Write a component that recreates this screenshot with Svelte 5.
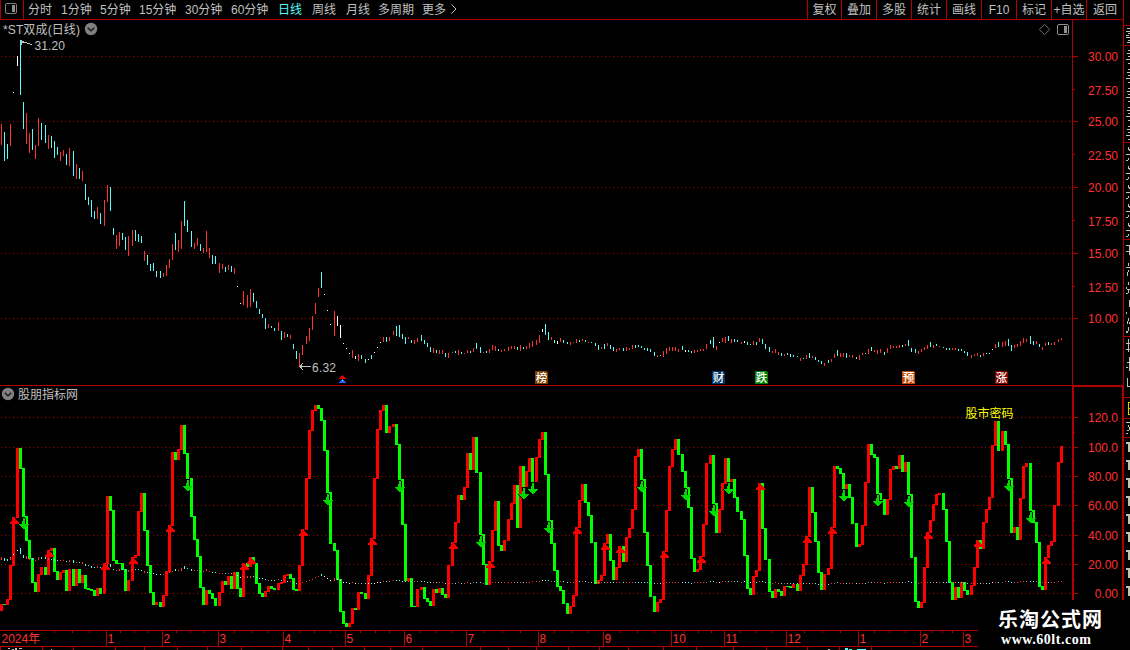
<script>
  const periods = [
    ['分时', 28], ['1分钟', 61], ['5分钟', 100], ['15分钟', 139], ['30分钟', 185], ['60分钟', 231],
    ['日线', 278], ['周线', 312], ['月线', 346], ['多周期', 378], ['更多', 422]
  ].map(([label, start], i, all) => ({
    label,
    width: (all[i + 1] ? all[i + 1][1] : 450) - start,
    active: label === '日线'
  }));
  const tools = ['复权', '叠加', '多股', '统计', '画线', 'F10', '标记', '+自选', '返回'];

  // Bar centres: 3px apart, with an extra pixel after these positions
  const jumps = new Set([13, 41, 69, 100, 128, 156, 187, 215, 243, 274, 302, 330, 361, 389, 417, 448, 476,
    504, 532, 563, 591, 619, 650, 678, 706, 737, 765, 793, 824, 852, 880, 911, 939, 967, 998, 1026, 1054]);
  const xs = [];
  for (let x = 1; x <= 1061; x += jumps.has(x) ? 4 : 3) xs.push(x);

  // colour, top and bottom of each day's range
  const days = `r124:145 c132:161 c144:159 r124:146 w92:93 w56:66 c40:95 c102:129 r113:144 r133:153 c129:150 r145:159 r118:146 c123:140
c125:143 r135:149 c136:148 c141:158 c147:155 r152:161 r150:156 c154:165 r148:166 c151:176 r164:179 c168:179 r171:181 c184:200
c197:205 c200:217 c211:219 r207:219 c213:224 r200:226 r185:202 c187:211 c228:235 r235:249 r232:246 c233:240 c237:250 r236:256
r230:246 c230:241 c234:242 c236:243 r251:261 c255:265 c264:271 c263:271 c271:277 c271:278 r273:277 r265:276 r259:268 r244:260
c233:250 r240:252 r221:249 c201:226 c220:232 c231:247 r243:249 r238:246 c244:251 r248:253 r231:252 r248:258 c255:264 c256:264
r263:273 r264:269 c267:272 r265:270 c266:272 r268:274 w286:287 w303:304 r291:305 r295:308 r289:307 c293:302 c301:308 c309:314
c314:318 c318:329 r324:328 c326:328 c328:331 r322:331 c331:340 r332:338 c334:337 r335:339 c344:349 c351:359 r353:366 r345:355
r336:344 r328:341 r316:330 r303:314 r288:297 c272:288 w294:295 w310:311 w324:325 r311:336 w316:326 w325:338 w343:344 w348:349
w353:354 r350:358 w356:359 r354:361 c355:359 c359:363 w359:360 c355:359 w352:353 w347:348 w342:343 r337:342 c337:342 r337:341
r331:335 c326:336 c325:337 c334:339 c337:344 r337:339 c340:343 r340:344 r338:342 c335:341 c340:344 c343:347 c347:352 r348:353
c350:353 r350:354 r350:354 c353:357 r353:358 r352:353 c351:353 r350:355 c352:354 r353:354 r350:353 c351:353 r348:352 c343:349
c347:353 r352:353 c351:353 r349:353 r345:350 r346:351 c349:351 r350:352 r349:351 r347:351 r346:349 r346:349 c347:350 r345:351
c347:349 r346:349 r343:348 r341:347 r340:345 r335:343 w329:332 c324:335 c332:340 r337:340 c340:343 w341:344 r338:342 c340:343
c342:344 r342:345 r342:343 r339:343 c340:342 r339:341 c340:342 r342:343 c342:343 c343:346 c345:350 r347:349 c344:349 r343:346
c345:349 c347:351 r349:352 r348:350 c348:351 r347:351 r348:350 r345:349 c345:348 c345:347 c346:348 c348:350 c348:351 c349:352
c352:356 r355:357 c355:356 r351:357 r348:354 r347:351 r347:351 r347:351 r349:352 c346:350 w350:352 c350:352 c351:353 r350:353
r350:352 r349:351 r349:351 r344:349 c340:344 c337:348 r346:350 w342:343 r338:342 r337:343 c336:341 r339:343 c339:342 c340:342
r342:344 w341:343 c342:345 c344:345 r341:345 c342:345 r338:342 c339:344 c344:349 c347:352 r351:353 r349:353 r352:355 c353:356
r354:356 c353:355 c354:357 c355:357 c356:357 r358:361 c358:359 r355:359 c353:358 r356:358 c357:360 c360:362 c361:364 r363:366
c360:363 r359:362 r354:358 c350:356 r353:357 r353:357 c353:358 r355:357 r355:358 c357:359 r355:360 r353:355 c353:354 r349:354
c347:351 r350:352 r350:354 r349:353 c352:355 r348:353 r345:349 r346:348 r346:348 r345:348 c345:347 r344:346 c340:346 c348:352
c349:353 r351:354 r349:352 r347:350 r345:349 c342:347 r345:348 c344:346 r346:347 c347:348 c348:350 c348:350 r348:350 r348:350
c349:351 c349:351 c351:353 c352:356 r355:358 r354:356 r353:356 c355:357 r353:356 c353:354 c353:354 w349:350 r344:348 c342:347
r342:347 r341:346 c339:346 c345:351 r345:348 r344:347 r341:346 r338:343 r339:342 c336:344 c341:345 r341:344 c344:347 r347:350
r343:346 c342:345 r343:345 r342:345 r339:342 r338:340`.split(/\s+/).map((d, i) => {
    const [top, bottom] = d.slice(1).split(':').map(Number);
    return { x: xs[i], tone: d[0], top, bottom };
  });

  // Oscillator levels in thirds of a pixel, measured from the pane's top
  const levels = [657, 657, 642, 540, 396, 189, 249, 393, 465, 519, 591, 618, 567, 546, 567, 495, 489, 558, 582, 561, 555, 615, 552, 600,
    552, 591, 570, 609, 612, 615, 630, 609, 624, 534, 333, 375, 525, 534, 535, 552, 615, 585, 516, 510, 378, 324, 435, 540, 621, 657,
    651, 663, 630, 558, 420, 201, 222, 192, 120, 204, 279, 393, 462, 513, 606, 657, 615, 624, 639, 660, 621, 588, 597, 573, 609, 561,
    609, 633, 534, 543, 516, 534, 594, 624, 633, 618, 603, 609, 612, 594, 591, 570, 567, 579, 612, 615, 540, 432, 279, 135, 75, 60,
    69, 105, 195, 321, 474, 495, 582, 678, 714, 723, 714, 669, 672, 621, 624, 639, 570, 459, 279, 132, 75, 60, 141, 123, 117, 177,
    282, 417, 585, 579, 663, 664, 612, 606, 639, 648, 660, 612, 621, 609, 627, 636, 540, 471, 411, 330, 342, 306, 204, 252, 156, 261,
    447, 537, 597, 528, 435, 348, 480, 495, 465, 402, 354, 300, 426, 243, 303, 258, 219, 288, 216, 162, 141, 267, 405, 474, 555, 603,
    615, 654, 684, 663, 630, 426, 345, 297, 351, 390, 471, 594, 585, 570, 474, 447, 525, 582, 546, 483, 528, 456, 429, 372, 213, 192,
    282, 441, 540, 633, 678, 651, 642, 498, 375, 243, 192, 162, 207, 258, 306, 366, 519, 558, 552, 513, 417, 234, 210, 354, 441, 372,
    294, 219, 288, 282, 336, 378, 402, 510, 609, 627, 573, 555, 294, 429, 522, 618, 636, 612, 618, 630, 603, 602, 606, 597, 615, 570,
    537, 453, 306, 381, 468, 561, 612, 567, 549, 426, 243, 249, 264, 309, 297, 336, 414, 483, 477, 420, 291, 177, 207, 216, 324, 342,
    387, 342, 252, 243, 249, 210, 258, 231, 327, 516, 648, 666, 651, 546, 441, 405, 357, 327, 324, 372, 468, 591, 642, 606, 636, 591,
    615, 627, 600, 546, 465, 489, 411, 372, 336, 180, 108, 195, 138, 177, 279, 441, 426, 462, 339, 243, 234, 375, 411, 471, 603, 612,
    516, 480, 468, 360, 231, 183].map((v) => 385 + Math.round(v / 3));
  const steps = levels.map((v, i) => {
    const from = i ? levels[i - 1] : 610;
    return { x: xs[i] - 1, y: Math.min(v, from), h: Math.abs(v - from) + 1, up: v < from || i === 0 };
  });
  const ups = [4, 15, 33, 42, 54, 78, 80, 97, 119, 145, 157, 185, 194, 199, 213, 225, 244, 259, 267, 298, 314, 336];
  const downs = [7, 60, 105, 128, 154, 168, 171, 176, 206, 220, 229, 234, 271, 282, 292, 324, 331];

  const toLower = (y) => Math.round(593.6 - 1.467 * (10 + (318.5 - y) / 13.12));
  const tones = { r: '#ff3030', c: '#54fcfc', w: '#ffffff' };

  const upperAxis = [[56, '30.00', 56], [89, '27.50', 90], [121, '25.00', 121], [154, '22.50', 155], [187, '20.00', 187],
    [220, '17.50', 221], [253, '15.00', 253], [286, '12.50', 287], [318, '10.00', 318]];
  const lowerAxis = [[417, '120.0'], [447, '100.0'], [476, '80.00'], [505, '60.00'], [535, '40.00'], [564, '20.00'], [593, '0.00']];
  const lowerMinor = [432, 462, 491, 520, 550, 579];
  const months = [[0, '2024年'], [106, '1'], [162, '2'], [218, '3'], [283, '4'], [345, '5'], [404, '6'], [466, '7'], [538, '8'],
    [603, '9'], [671, '10'], [724, '11'], [786, '12'], [858, '1'], [920, '2'], [963, '3']];
  const weekTicks = [54, 72, 89, 120, 134, 148, 176, 190, 204, 234, 251, 267, 299, 314, 330, 360, 375, 389, 420, 435, 451, 484, 502,
    520, 554, 571, 587, 620, 637, 654, 684, 698, 711, 740, 755, 771, 804, 822, 840, 874, 889, 905, 931, 942, 952];
  const tabTicks = [0, 42, 73, 115, 144, 177, 207, 241, 282, 308, 332, 364, 390, 422, 480, 508, 536, 568, 599, 628, 663, 696, 733,
    766, 807, 839, 871];
  const badges = [['榜', 535, '#7f3f00'], ['财', 712, '#003468'], ['跌', 755, '#008000'], ['预', 902, '#c04808'], ['涨', 995, '#800000']];
  const sideRules = [25, 45, 142, 239, 336, 397, 418, 437];
  const sellRows = [50, 69, 88, 107, 126];
  const buyRows = [147, 166, 185, 204, 223];
  const ones = [442, 460, 478, 496, 514, 532, 550, 568, 586];
</script>

<div class="app">
  <header class="toolbar">
    <div class="panel-toggle">
      <svg width="12" height="12" viewBox="0 0 12 12">
        <rect x=".5" y=".5" width="11" height="10" rx="1.5" fill="none" stroke="#808080" />
        <rect x="7" y="2" width="3" height="7" fill="#909090" />
      </svg>
    </div>
    <nav class="periods">
      {#each periods as p}
        <span class:active={p.active} style:width="{p.width}px">{p.label}</span>
      {/each}
      <svg width="8" height="10" viewBox="0 0 8 10"><path d="M1.5 .5L6 5L1.5 9.5" fill="none" stroke="#c0c0c0" /></svg>
    </nav>
    <div class="tools">
      {#each tools as t}<span>{t}</span>{/each}
    </div>
    <div class="edge"></div>
  </header>

  <svg class="charts" width="1130" height="630" viewBox="0 20 1130 630" shape-rendering="crispEdges">
    <text class="label" x="3" y="33.5" textLength="77">*ST双成(日线)</text>
    <g shape-rendering="auto" fill="none">
      <circle cx="91" cy="29" r="6.2" fill="#808080" />
      <path d="M87.7 27.7L91 30.8L94.3 27.7" stroke="#181818" stroke-width="1.3" />
      <circle cx="8" cy="394" r="6.2" fill="#808080" />
      <path d="M4.7 392.7L8 395.8L11.3 392.7" stroke="#181818" stroke-width="1.3" />
      <path d="M1044.5 24.3L1049.7 29.5L1044.5 34.7L1039.3 29.5Z" stroke="#707070" />
      <rect x="1057.5" y="24.5" width="11" height="10" rx="1.5" stroke="#909090" />
      <rect x="1064" y="26" width="3" height="7" fill="#909090" />
    </g>

    <g stroke="#a00000" stroke-dasharray="1 3">
      {#each upperAxis as [y], i}
        {#if i % 2 === 0}<path d="M1 {y + 0.5}H1072" />{/if}
      {/each}
      {#each lowerAxis as [y]}<path d="M1 {y + 0.5}H1072" />{/each}
    </g>

    <g fill="#b00000">
      <rect x="1072" y="20" width="1" height="366" />
      <rect x="0" y="385" width="1073" height="1" />
      <rect x="1072" y="385" width="52" height="2" />
      <rect x="1072" y="385" width="2" height="215" />
      <rect x="1122" y="385" width="2" height="215" />
      <rect x="1123" y="20" width="1" height="366" />
      <rect x="0" y="630" width="978" height="1" />
      <rect x="0" y="646" width="978" height="1" />
      {#each upperAxis as [y], i}<rect x="1073" {y} width={i % 2 ? 2 : 5} height="1" />{/each}
      {#each lowerAxis as [y]}<rect x="1074" {y} width="4" height="1" />{/each}
      {#each lowerMinor as y}<rect x="1074" {y} width="1" height="1" />{/each}
      {#each months.slice(1) as [x]}<rect {x} y="631" width="1" height="15" />{/each}
      {#each weekTicks as x}<rect {x} y="631" width="1" height="2" />{/each}
      {#each tabTicks as x}<rect {x} y="647" width="1" height="3" />{/each}
      {#each sideRules as y}<rect x="1124" {y} width="6" height="1" />{/each}
    </g>

    {#each upperAxis as [y, label, mid]}<text class="axis" x="1118" y={mid + 5}>{label}</text>{/each}
    {#each lowerAxis as [y, label]}<text class="axis" x="1118" y={y + 5}>{label}</text>{/each}
    {#each months as [x, label]}<text class="month" x={x + 1.5} y="643">{label}</text>{/each}

    {#each days as d}
      <rect x={d.x} y={d.top} width="1" height={d.bottom - d.top} fill={tones[d.tone]} />
    {/each}
    <g fill="none" stroke="#c0c0c0">
      <path d="M21 41.5H24M21.5 40V45M22 42.5H25M25 42.5H27M27 43.5H30M30 44.5H32" />
      <path d="M299 366.5H311M300.5 365V368M301.5 364V369M302 363.5H303M302 369.5H303" />
    </g>
    <text class="label" x="34.5" y="50" textLength="30.5">31.20</text>
    <text class="label" x="312" y="372" textLength="24">6.32</text>
    <g>
      <path d="M342.5 375L346 379H339Z" fill="#e00000" />
      <path d="M342.5 379L346 383H339Z" fill="#3060ff" />
      <rect x="342" y="380" width="1" height="1" fill="#54fcfc" />
    </g>
    {#each badges as [mark, x, fill]}
      <path d="M{x} 371H{x + 11}L{x + 13} 373V384H{x}Z" {fill} />
      <text class="badge" x={x + 6.5} y="382">{mark}</text>
    {/each}

    <text class="label" x="18" y="398.5">股朋指标网</text>
    {#each steps as s}
      <rect x={s.x} y={s.y} width="3" height={s.h} fill={s.up ? '#ff0000' : '#00ff00'} />
    {/each}
    {#each days as d}
      <rect x={d.x} y={toLower(d.top)} width="1" height={Math.max(1, toLower(d.bottom) - toLower(d.top))} fill={tones[d.tone]} />
    {/each}
    {#each ups as i}
      <rect x={xs[i] - 1} y={levels[i]} width="3" height="1" fill="#ff0000" />
      <path d="M{xs[i] - 1} {levels[i] + 1}h3v1h1v1h1v1h1v1h1v2h-9v-2h1v-1h1v-1h1v-1h1Z" fill="#f80000" />
    {/each}
    {#each downs as i}
      <path d="M{xs[i]} {levels[i] + 2}h3v6h3v1h-1v1h-1v1h-1v1h-1v1h-1v1h-1v-1h-1v-1h-1v-1h-1v-1h-1v-1h-1v-1h4Z" fill="#000" />
      <path d="M{xs[i]} {levels[i] + 2}h2v6h4v1h-1v1h-1v1h-1v1h-1v1h-2v-1h-1v-1h-1v-1h-1v-1h-1v-1h3Z" fill="#00d800" />
    {/each}
    <text class="label hot" x="965.5" y="418">股市密码</text>

    <g fill="#c0c0c0">
      <rect x="1127" y="28" width="3" height="1" /><rect x="1126" y="31" width="4" height="1" />
      <rect x="1128" y="33" width="2" height="1" /><rect x="1126" y="35" width="3" height="1" />
      <rect x="1126" y="37" width="4" height="1" /><rect x="1128" y="40" width="2" height="1" /><rect x="1127" y="42" width="3" height="1" />
      {#each sellRows as y}
        <rect x="1128" {y} width="2" height="1" />
        <rect x="1127" y={y + 3} width="3" height="1" /><rect x="1126" y={y + 9} width="4" height="1" />
        <rect x="1128" y={y + 6} width="2" height="1" /><rect x="1128" y={y + 13} width="2" height="1" />
      {/each}
      {#each buyRows as y}
        <rect x="1128" {y} width="1" height="3" /><rect x="1129" y={y + 2} width="1" height="2" />
        <rect x="1126" y={y + 7} width="4" height="1" /><rect x="1126" y={y + 13} width="2" height="1" /><rect x="1128" y={y + 11} width="1" height="2" />
      {/each}
      <path d="M1126 245h4v1h-4zM1129 245h1v10h-1zM1126 251h4v1h-4zM1128 263h1v3h-1zM1126 267h4v1h-4zM1127 272h1v4h-1zM1128 270h1v2h-1z" />
      <path d="M1128 282h1v3h-1zM1126 287h1v2h-1zM1127 289h3v1h-3zM1126 293h2v1h-2zM1128 290h1v3h-1zM1129 300h1v7h-1zM1126 312h1v2h-1z" />
      <path d="M1128 318h1v3h-1zM1127 321h1v3h-1zM1129 322h1v2h-1zM1128 327h1v4h-1zM1126 331h2v2h-2z" />
      <path d="M1128 339h1v13h-1zM1126 343h4v1h-4zM1126 349h4v1h-4zM1129 357h1v14h-1zM1127 362h3v1h-3zM1126 367h2v1h-2zM1127 378h1v9h-1zM1128 386h2v1h-2z" />
      <path d="M1126 422h4v1h-4zM1128 425h1v2h-1zM1129 427h1v3h-1zM1127 430h2v1h-2zM1126 433h2v1h-2z" />
      {#each ones as y}
        <rect x="1126" {y} width="4" height="2" /><rect x="1128" {y} width="2" height="10" />
      {/each}
      <path d="M8 648h2v1h-2zM12 649h2v1h-2zM15 648h2v2h-2zM19 648h3v1h-3zM51 649h1v1h-1zM828 649h2v1h-2z" />
    </g>
    <path d="M1128 402h2v1h-1v5h1v1h-1v5h1v1h-2z" fill="#e0d000" />
    <path d="M845 648h3v2h-3zM849 649h3v1h-3zM857 649h9v1h-9z" fill="#54fcfc" />

    <rect x="978" y="600" width="152" height="50" fill="#000" />
    <text class="mark" x="998" y="626.5" textLength="104">乐淘公式网</text>
    <text class="url" x="1001" y="644" textLength="90">www.60lt.com</text>
  </svg>
</div>

<style>
  :global(body) {
    background: #000;
    overflow: hidden;
  }
  .app {
    width: 1130px;
    height: 650px;
    display: flex;
    flex-direction: column;
    background: #000;
    color: #c0c0c0;
    font: 12px 'Liberation Sans', 'Noto Sans CJK SC', sans-serif;
    overflow: hidden;
  }
  .toolbar {
    height: 20px;
    flex: none;
    display: flex;
    box-sizing: border-box;
    line-height: 20px;
    white-space: nowrap;
  }
  .panel-toggle,
  .periods,
  .tools {
    box-sizing: border-box;
    display: flex;
    height: 20px;
    border-bottom: 1px solid #b00000;
  }
  .panel-toggle {
    width: 24px;
    padding: 3px 0 0 4px;
    border-left: 1px solid #b00000;
    border-right: 1px solid #b00000;
  }
  .periods {
    flex: 1;
    padding-left: 4px;
  }
  .periods span {
    flex: none;
  }
  .periods .active {
    color: #54fcfc;
  }
  .periods svg {
    margin-top: 4px;
  }
  .tools span {
    width: 34px;
    height: 19px;
    border-left: 1px solid #b00000;
    text-align: center;
  }
  .tools span:first-child {
    width: 33px;
  }
  .tools span:last-child {
    width: 36px;
  }
  .edge {
    width: 6px;
    border-left: 1px solid #b00000;
  }
  .charts {
    display: block;
    flex: none;
  }
  .label {
    fill: #c0c0c0;
  }
  .hot {
    fill: #ffff00;
  }
  .axis {
    fill: #ff3030;
    text-anchor: end;
  }
  .month {
    fill: #ff3030;
  }
  .badge {
    fill: #fff;
    text-anchor: middle;
    font-size: 11.5px;
    font-weight: 500;
  }
  .mark {
    fill: #fff;
    font: 700 20px 'Noto Sans CJK SC', sans-serif;
  }
  .url {
    fill: #fff;
    font: 700 14px 'Liberation Serif', serif;
  }
</style>
